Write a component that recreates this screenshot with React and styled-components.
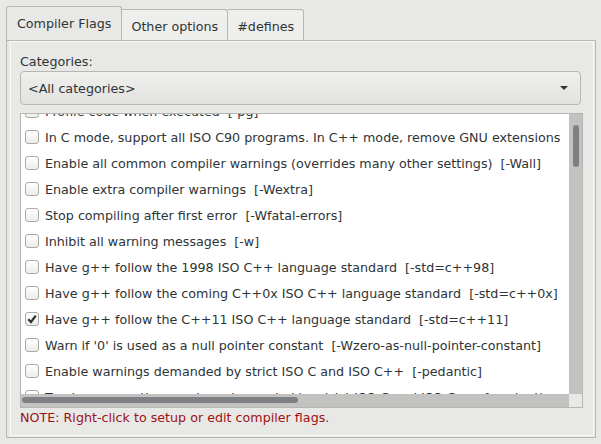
import React from 'react';
import styled, { createGlobalStyle, css } from 'styled-components';

const GlobalStyle = createGlobalStyle`
  html, body {
    margin: 0;
    background: #e8e8e7;
  }
  body {
    font-family: 'DejaVu Sans', 'Liberation Sans', sans-serif;
    font-size: 12.7px;
    color: #2e3436;
  }
`;

const flags = [
  { label: 'Profile code when executed  [-pg]' },
  { label: 'In C mode, support all ISO C90 programs. In C++ mode, remove GNU extensions  [-ansi]' },
  { label: 'Enable all common compiler warnings (overrides many other settings)  [-Wall]' },
  { label: 'Enable extra compiler warnings  [-Wextra]' },
  { label: 'Stop compiling after first error  [-Wfatal-errors]' },
  { label: 'Inhibit all warning messages  [-w]' },
  { label: 'Have g++ follow the 1998 ISO C++ language standard  [-std=c++98]' },
  { label: 'Have g++ follow the coming C++0x ISO C++ language standard  [-std=c++0x]' },
  { label: 'Have g++ follow the C++11 ISO C++ language standard  [-std=c++11]', checked: true },
  { label: "Warn if '0' is used as a null pointer constant  [-Wzero-as-null-pointer-constant]" },
  { label: 'Enable warnings demanded by strict ISO C and ISO C++  [-pedantic]' },
  { label: 'Treat as errors the warnings demanded by strict ISO C and ISO C++  [-pedantic-errors]' },
];

const App = () => {
  return (
    <>
      <GlobalStyle />
      <Window>
        <TabBar>
          <Tab active>Compiler Flags</Tab>
          <Tab>Other options</Tab>
          <Tab>#defines</Tab>
        </TabBar>
        <Page>
          <Frame>
            <Label>Categories:</Label>
            <Combo>
              <span>&lt;All categories&gt;</span>
              <Arrow />
            </Combo>
            <FlagList>
              <Viewport>
                <Rows>
                  {flags.map(f => (
                    <Row key={f.label}>
                      <Check>
                        {f.checked ? (
                          <svg width="10" height="10" viewBox="0 0 10 10">
                            <path
                              d="M1.2 5.2 L4 8 L8.8 1.6"
                              fill="none"
                              stroke="#2e3436"
                              strokeWidth="2.2"
                            />
                          </svg>
                        ) : null}
                      </Check>
                      <RowText>{f.label}</RowText>
                    </Row>
                  ))}
                </Rows>
              </Viewport>
              <VTrough>
                <VSlider />
              </VTrough>
              <HTrough>
                <HSlider />
              </HTrough>
              <Corner />
            </FlagList>
            <Note>NOTE: Right-click to setup or edit compiler flags.</Note>
          </Frame>
        </Page>
      </Window>
    </>
  );
};

export default App;

const Window = styled.div`
  padding: 6px 5px 6px 6px;
  height: 444px;
  box-sizing: border-box;
  display: flex;
  flex-direction: column;
`;

const TabBar = styled.div`
  display: flex;
  align-items: flex-end;
  height: 34px;
`;

const Tab = styled.div`
  box-sizing: border-box;
  height: 31px;
  padding: 2px 9px 0 9px;
  display: flex;
  align-items: center;
  background: #eeeeec;
  border: 1px solid #b6b6b3;
  border-bottom: none;
  border-left: none;
  border-radius: 0 3px 0 0;
  white-space: nowrap;

  ${p =>
    p.active &&
    css`
      height: 34px;
      padding: 0 10px 0 10px;
      border-left: 1px solid #b6b6b3;
      border-radius: 3px 3px 0 0;
      background: #e8e8e7;
    `}
`;

const Page = styled.div`
  flex: 1;
  display: flex;
  border: 1px solid #b6b6b3;
  padding: 0 1px 1px 3px;
`;

const Frame = styled.div`
  flex: 1;
  display: flex;
  flex-direction: column;
  border: 1px solid #fafafa;
  padding: 11px 10px 9px 9px;
`;

const Label = styled.div`
  line-height: 17px;
`;

const Combo = styled.div`
  box-sizing: border-box;
  height: 34px;
  margin: 1px 2px 8px 0;
  padding: 0 12px 0 7px;
  display: flex;
  align-items: center;
  justify-content: space-between;
  border: 1px solid #b6b6b3;
  border-radius: 4px;
  background: linear-gradient(#efefed, #e2e2df);
`;

const Arrow = styled.div`
  width: 0;
  height: 0;
  border-left: 4px solid transparent;
  border-right: 4px solid transparent;
  border-top: 4px solid #2e3436;
`;

const FlagList = styled.div`
  height: 295px;
  box-sizing: border-box;
  border: 1px solid #b6b6b3;
  display: grid;
  grid-template-columns: 1fr 13px;
  grid-template-rows: 1fr 13px;
`;

const Viewport = styled.div`
  overflow: hidden;
  background: #fff;
`;

const Rows = styled.div`
  margin-top: -16px;
  padding-left: 4px;
`;

const Row = styled.div`
  height: 26px;
  display: flex;
  align-items: center;
  gap: 6px;
  white-space: pre;
`;

const Check = styled.div`
  box-sizing: border-box;
  width: 14px;
  height: 14px;
  flex: none;
  border: 1px solid #a9a9a6;
  border-radius: 3px;
  background: linear-gradient(#ffffff, #ececea);
  display: flex;
  align-items: center;
  justify-content: center;
`;

const RowText = styled.span`
  line-height: 17px;
`;

const VTrough = styled.div`
  background: #c2c2c0;
  padding: 11px 3px 0 4px;
`;

const VSlider = styled.div`
  height: 42px;
  border-radius: 3px;
  background: #7e8083;
`;

const HTrough = styled.div`
  background: #c2c2c0;
  padding: 3px 0 3px 1px;
`;

const HSlider = styled.div`
  width: 276px;
  height: 6px;
  border-radius: 3px;
  background: #7e8083;
`;

const Corner = styled.div`
  background: #e8e8e7;
`;

const Note = styled.div`
  margin-top: 1px;
  line-height: 17px;
  color: #9d1212;
`;
